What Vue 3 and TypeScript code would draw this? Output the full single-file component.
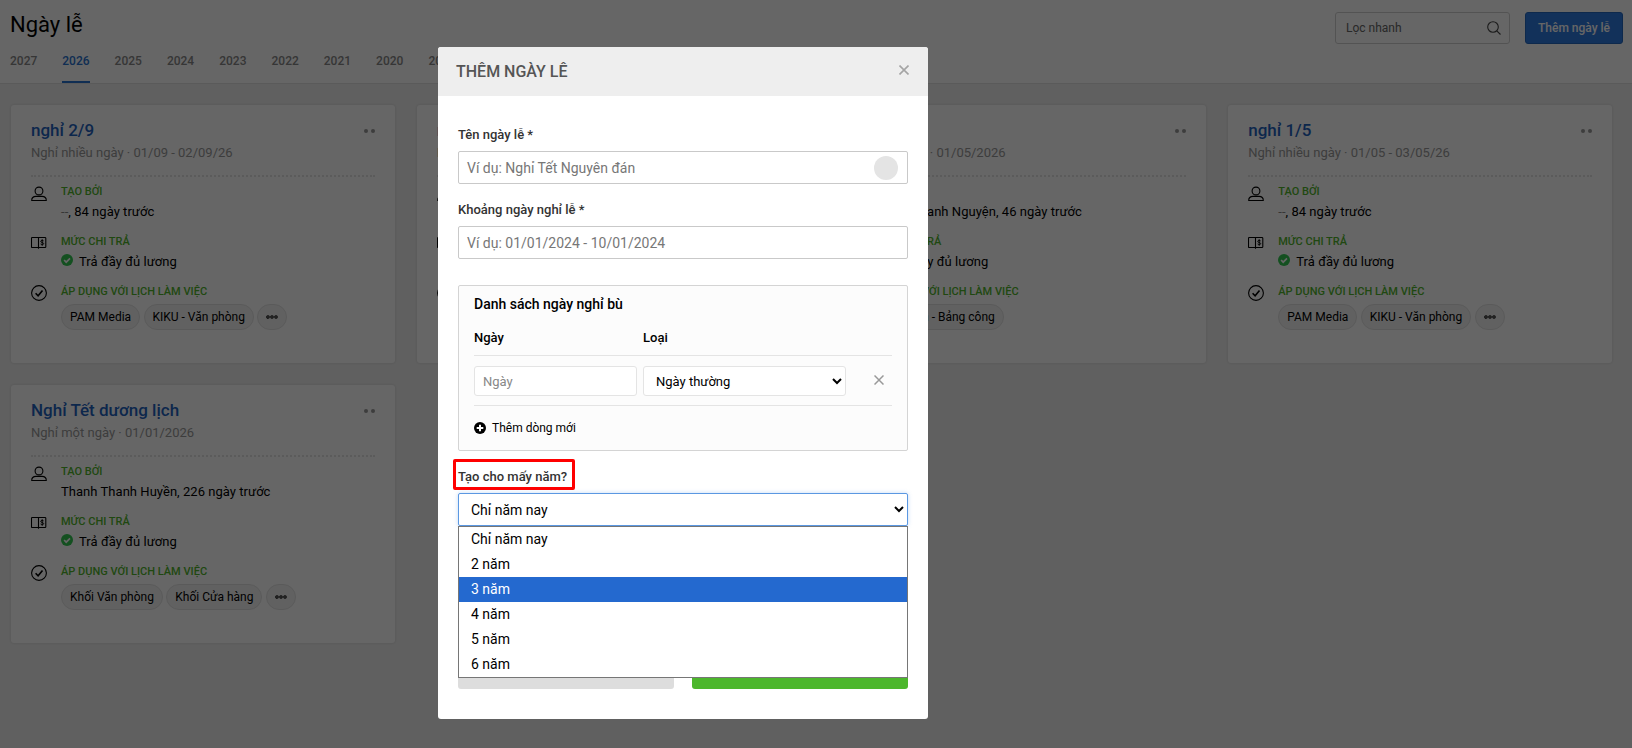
<script setup lang="ts">
import { ref } from 'vue'

interface Holiday {
  title: string
  sub: string
  by: string
  unknown?: boolean
  tags: string[]
  more: boolean
}

const years = [2027, 2026, 2025, 2024, 2023, 2022, 2021, 2020, 2019]
const active = ref(2026)

const holidays: Holiday[] = [
  { title: 'nghỉ 2/9', sub: 'Nghỉ nhiều ngày · 01/09 - 02/09/26', by: ', 84 ngày trước', unknown: true, tags: ['PAM Media', 'KIKU - Văn phòng'], more: true },
  { title: 'nghỉ', sub: 'Nghỉ', by: 'Thanh', tags: ['PAM Media'], more: false },
  { title: 'nghỉ', sub: 'Nghỉ một ngày · 01/05/2026', by: 'Thanh Thanh Nguyện, 46 ngày trước', tags: ['Khối Sàn - Bảng công'], more: false },
  { title: 'nghỉ 1/5', sub: 'Nghỉ nhiều ngày · 01/05 - 03/05/26', by: ', 84 ngày trước', unknown: true, tags: ['PAM Media', 'KIKU - Văn phòng'], more: true },
  { title: 'Nghỉ Tết dương lịch', sub: 'Nghỉ một ngày · 01/01/2026', by: 'Thanh Thanh Huyền, 226 ngày trước', tags: ['Khối Văn phòng', 'Khối Cửa hàng'], more: true },
]

const repeatOptions = ['Chỉ năm nay', '2 năm', '3 năm', '4 năm', '5 năm', '6 năm']
const highlighted = ref(2)
</script>

<template>
  <div class="page">
    <header class="top">
      <div class="top-left">
        <h1>Ngày lễ</h1>
        <nav class="tabs">
          <a v-for="y in years" :key="y" :class="{ on: y === active }">{{ y }}</a>
        </nav>
      </div>
      <div class="tools">
        <div class="search">
          <span>Lọc nhanh</span>
          <svg width="14" height="14" viewBox="0 0 14 14" fill="none" stroke="#444" stroke-width="1.1">
            <circle cx="6" cy="6" r="5.3" />
            <path d="M9.8 9.8L13.5 13.5" />
          </svg>
        </div>
        <button class="primary">Thêm ngày lễ</button>
      </div>
    </header>

    <main class="cards">
      <article v-for="(h, i) in holidays" :key="i" class="card">
        <div class="card-head">
          <h2>{{ h.title }}</h2>
          <span class="dots"><i></i><i></i></span>
        </div>
        <p class="sub">{{ h.sub }}</p>
        <div class="rule"></div>
        <section class="row">
          <svg class="ico user" width="16" height="16" viewBox="0 0 16 16" fill="none" stroke="#000" stroke-width="1.1">
            <circle cx="8" cy="5" r="3.9" />
            <path d="M.7 14.5C.7 12 2.6 10.4 5 10.4h6c2.4 0 4.3 1.600 4.3 4.100z" stroke-linejoin="round" />
          </svg>
          <div>
            <h3>TẠO BỞI</h3>
            <p><span v-if="h.unknown" class="muted">--</span>{{ h.by }}</p>
          </div>
        </section>
        <section class="row">
          <svg class="ico" width="16" height="16" viewBox="0 0 16 16" fill="none" stroke="#000" stroke-width="1.1">
            <path d="M7.5 13.8V2.5M7.5 12.500H1.300a.8.8 0 0 1-.8-.8V3.300a.8.8 0 0 1 .8-.8H14a.8.8 0 0 1 .8.8v8.400a.8.8 0 0 1-.8.8H7.500" />
            <path stroke-width=".95" d="M12.600 5.900c-.5-.6-2.900-.8-2.900.5 0 1.400 3 .8 3 2.200 0 1.300-2.500 1.200-3.100.4M11.200 4.200v6.600" />
          </svg>
          <div>
            <h3>MỨC CHI TRẢ</h3>
            <p class="paid">
              <svg width="12" height="12" viewBox="0 0 12 12">
                <circle cx="6" cy="6" r="6" fill="#32c752" />
                <path d="M3.100 6l2.100 2.200L9 4.400" fill="none" stroke="#fff" stroke-width="1.700" />
              </svg>
              <span>Trả đầy đủ lương</span>
            </p>
          </div>
        </section>
        <section class="row">
          <svg class="ico" width="16" height="16" viewBox="0 0 16 16" fill="none" stroke="#000">
            <circle cx="8" cy="8" r="7.400" stroke-width="1.100" />
            <path d="M4.600 8.300l2.500 2.500L11.500 5.600" stroke-width="1.600" />
          </svg>
          <div>
            <h3>ÁP DỤNG VỚI LỊCH LÀM VIỆC</h3>
            <div class="tags">
              <span v-for="t in h.tags" :key="t" class="tag">{{ t }}</span>
              <span v-if="h.more" class="tag more">
                <svg width="12" height="4" viewBox="0 0 12 4" fill="none" stroke="#000" stroke-width="1.100">
                  <circle cx="2" cy="2" r="1.200" /><circle cx="6" cy="2" r="1.200" /><circle cx="10" cy="2" r="1.200" />
                </svg>
              </span>
            </div>
          </div>
        </section>
      </article>
    </main>

    <div class="overlay">
      <div class="dialog">
        <div class="dialog-head">
          <span>THÊM NGÀY LÊ</span>
          <svg width="10" height="10" viewBox="0 0 10 10" stroke="#a4a4a4" stroke-width="1.600"><path d="M.5.5l9 9M9.500.5l-9 9" /></svg>
        </div>
        <div class="dialog-body">
          <label class="lbl">Tên ngày lễ *</label>
          <div class="field"><span>Ví dụ: Nghỉ Tết Nguyên đán</span><i class="knob"></i></div>
          <label class="lbl second">Khoảng ngày nghỉ lễ *</label>
          <div class="field"><span>Ví dụ: 01/01/2024 - 10/01/2024</span></div>

          <div class="comp">
            <div class="comp-title">Danh sách ngày nghỉ bù</div>
            <div class="comp-grid comp-cols"><span>Ngày</span><span>Loại</span></div>
            <div class="comp-grid comp-row">
              <div class="day">Ngày</div>
              <select class="kind"><option>Ngày thường</option></select>
              <svg width="10" height="10" viewBox="0 0 10 10" stroke="#999" stroke-width="1.500"><path d="M.5.5l9 9M9.500.5l-9 9" /></svg>
            </div>
            <div class="add">
              <svg width="12" height="12" viewBox="0 0 12 12"><circle cx="6" cy="6" r="6" /><path d="M6 2.700v6.600M2.700 6h6.600" stroke="#fff" stroke-width="2" /></svg>
              <span>Thêm dòng mới</span>
            </div>
          </div>

          <div class="repeat-label">
            <label class="lbl">Tạo cho mấy năm?</label>
            <div class="mark"></div>
          </div>
          <div class="repeat">
            <select class="years"><option>Chỉ năm nay</option></select>
            <ul class="menu">
              <li v-for="(o, i) in repeatOptions" :key="o" :class="{ hit: i === highlighted }">{{ o }}</li>
            </ul>
          </div>
          <div class="actions"><button class="cancel"></button><button class="ok"></button></div>
        </div>
      </div>
    </div>
  </div>
</template>

<style>
body { margin: 0; overflow: hidden; }
</style>

<style scoped>
* { box-sizing: border-box; }
h1, h2, h3, p, ul { margin: 0; padding: 0; font-weight: 400; }
.page { height: 748px; background: #f0f0f0; font-family: Roboto, "Liberation Sans", sans-serif; font-size: 13px; color: #000; overflow: hidden; }
.top { height: 84px; background: #fff; border-bottom: 1px solid #e0e0e0; display: flex; justify-content: space-between; padding: 0 9px 0 10px; }
.top-left { display: flex; flex-direction: column; }
h1 { font-size: 22px; line-height: 30px; padding-top: 10px; height: 44px; }
.tabs { display: flex; gap: 24.3px; height: 40px; }
.tabs a { width: 28px; font-size: 12px; font-weight: 500; line-height: 35px; color: #888; border-bottom: 2px solid transparent; white-space: nowrap; }
.tabs a.on { color: #2a73cf; border-color: #2a73cf; }
.tools { display: flex; gap: 15px; padding-top: 12px; align-items: flex-start; }
.search { width: 175px; height: 32px; border: 1px solid #d0d0d0; border-radius: 3px; padding: 0 8px 0 10px; display: flex; align-items: center; justify-content: space-between; font-size: 12px; color: #666; }
.primary { width: 98px; height: 32px; border: 1px solid #2568bd; border-radius: 3px; background: #2f7be0; color: #fff; font: 500 12px Roboto, sans-serif; padding: 0; }

.cards { display: grid; grid-template-columns: repeat(4, 1fr); gap: 22px; padding: 21px 20px 0 11px; }
.card { height: 258px; background: #fff; border-radius: 3px; box-shadow: 0 0 3px rgba(0, 0, 0, .12); padding: 15px 20px 0; overflow: hidden; }
.card-head { display: flex; justify-content: space-between; height: 22px; }
h2 { font-size: 17px; font-weight: 500; line-height: 20px; color: #1f63bf; white-space: nowrap; }
.dots { display: flex; gap: 3px; align-items: center; }
.dots i { width: 4px; height: 4px; border-radius: 50%; background: #999; }
.sub { font-size: 13px; line-height: 20px; color: #999; margin-top: 1px; white-space: nowrap; }
.rule { border-top: 2px dotted #e4e4e4; margin-top: 12px; }
.row { display: flex; gap: 14px; height: 50px; padding-top: 6px; }
.ico { margin-top: 2px; flex: none; }
.user { margin-top: 3px; }
h3 { font-size: 11px; line-height: 18px; font-weight: 500; color: #51b52c; white-space: nowrap; }
.row p { line-height: 22px; white-space: nowrap; letter-spacing: .04px; }
.muted { color: #888; }
.paid { display: flex; align-items: center; gap: 6px; }
.paid svg { margin-top: -4px; }
.tags { display: flex; gap: 3.4px; margin-top: 3px; }
.tag { height: 26px; border: 1px solid #e2e2e2; background: #f2f2f2; border-radius: 13px; padding: 0 8px; font-size: 12px; line-height: 24px; white-space: nowrap; }
.more { width: 30px; display: flex; align-items: center; justify-content: center; padding: 0; }

.overlay { position: fixed; inset: 0; background: rgba(0, 0, 0, .6); padding: 47px 0 0 438px; }
.dialog { width: 490px; height: 672px; background: #fff; border-radius: 3px; }
.dialog-head { height: 49px; background: #eee; border-radius: 3px 3px 0 0; padding: 0 19px 0 18px; display: flex; align-items: center; justify-content: space-between; font-size: 16px; font-weight: 500; color: #555; }
.dialog-head svg { margin-top: -3px; }
.dialog-body { padding: 29px 20px 0; display: flex; flex-direction: column; }
.lbl { display: block; font-size: 13px; font-weight: 500; line-height: 20px; height: 26px; color: #333; }
.second { margin-top: 16px; }
.field { height: 33px; border: 1px solid #c9c9c9; border-radius: 2px; padding: 0 9px 0 8px; display: flex; align-items: center; justify-content: space-between; font-size: 14px; line-height: 30px; color: #777; }
.knob { width: 24px; height: 24px; border-radius: 50%; background: #e4e4e4; }
.comp { margin-top: 26px; height: 166px; border: 1px solid #d4d4d4; border-radius: 2px; background: #fcfcfc; padding: 8px 15px 0; }
.comp-title { font-size: 14px; font-weight: 500; line-height: 20px; }
.comp-grid { display: grid; grid-template-columns: 163px 203px 10px; column-gap: 6px; border-bottom: 1px solid #e4e4e4; }
.comp-cols { height: 42px; align-items: center; font-weight: 500; padding-top: 6px; }
.comp-row { height: 50px; padding-top: 10px; align-items: start; }
.comp-row svg { margin-left: 22px; margin-top: 9px; }
.day, .kind { height: 30px; border: 1px solid #e4e4e4; border-radius: 3px; background: #fff; font: 13px/29px Roboto, sans-serif; }
.day { padding-left: 8px; color: #888; }
.kind { padding: 0 0 0 8px; color: #000; }
.add { display: flex; align-items: center; gap: 6px; margin-top: 12px; height: 20px; font-size: 12px; }
.repeat-label { position: relative; height: 42px; padding-top: 16px; }
.mark { position: absolute; left: -5px; top: 8px; width: 122px; height: 31px; border: 3px solid #f00; border-radius: 2px; }
.repeat { position: relative; }
.years { display: block; width: 450px; height: 33px; border: 1px solid #5b98e2; border-radius: 2px; background: #fff; box-shadow: 0 0 4px rgba(90, 150, 225, .35); padding: 0 0 0 8px; font: 14px Roboto, sans-serif; color: #000; }
.menu { position: absolute; z-index: 2; left: 0; top: 33px; width: 450px; border: 1px solid #767676; background: #fff; list-style: none; font-size: 14px; }
.menu li { height: 25px; line-height: 25px; padding-left: 12px; }
.menu .hit { background: #2469cf; color: #fff; }
.actions { display: grid; grid-template-columns: 1fr 1fr; gap: 18px; margin-top: 125px; }
.actions button { height: 38px; border: 0; border-radius: 3px; }
.cancel { background: #ddd; }
.ok { background: #4cb72c; }
</style>
